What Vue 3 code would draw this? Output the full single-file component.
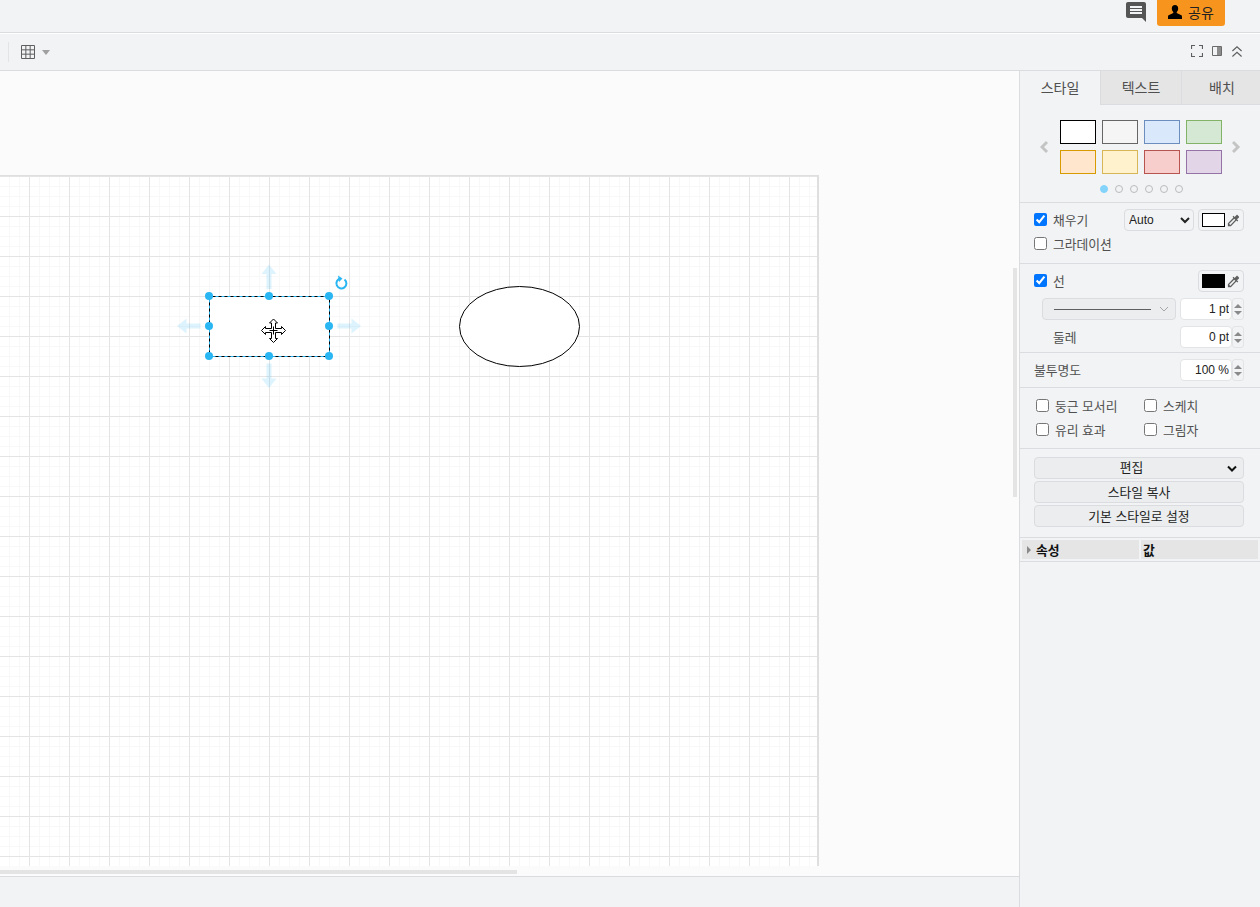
<template>
  <div class="app">
    <header class="menubar">
      <svg class="chat-icon" width="24" height="24" viewBox="0 0 24 24"><path d="M20 2H4c-1.1 0-2 .9-2 2v12c0 1.1.9 2 2 2h14l4 4V4c0-1.1-.9-2-2-2zm-2 12H6v-2h12v2zm0-3H6V9h12v2zm0-3H6V6h12v2z" /></svg>
      <button class="share-btn">
        <svg width="14" height="14" viewBox="0 0 14 14"><path d="M7 0C5 0 3.800 1.400 3.800 3.400c0 1.500.6 2.700 1.500 3.500v1.100L.6 10.300C0 10.600 0 11.200 0 14h14c0-2.800 0-3.400-.6-3.700L8.700 8V6.900c.9-.8 1.500-2 1.500-3.500C10.200 1.400 9 0 7 0z" /></svg>
        <span>공유</span>
      </button>
    </header>

    <div class="toolbar">
      <div class="tool-left">
        <span class="tool-sep"></span>
        <svg class="tool-grid" width="14" height="14" viewBox="0 0 14 14">
          <path d="M.5.5h13v13H.5zM4.830.5v13M9.170.5v13M.5 4.830h13M.5 9.170h13" />
        </svg>
        <span class="tool-caret"></span>
      </div>
      <div class="tool-right">
        <svg width="12" height="12" viewBox="0 0 12 12" class="line-icon"><path d="M.5 4V.5H4M8 .5h3.500V4M11.500 8v3.500H8M4 11.500H.5V8" /></svg>
        <svg width="10" height="10" viewBox="0 0 10 10" class="panel-icon"><path d="M.5.5h9v9h-9z" /><rect x="5" y="1" width="4" height="8" /></svg>
        <svg width="10" height="11" viewBox="0 0 10 11" class="line-icon"><path d="M.4 5 5 .8 9.600 5M.4 10.500 5 6.300l4.600 4.200" /></svg>
      </div>
    </div>

    <div class="main">
      <div class="left-col">
        <div class="canvas">
          <div class="page">
            <svg class="diagram" width="817" height="690" viewBox="0 176 817 690">
              <ellipse cx="519.500" cy="326.500" rx="60" ry="40" fill="#fff" stroke="#000" />
              <rect x="209.500" y="296.500" width="120" height="60" fill="#fff" stroke="#000" />
              <rect x="209.500" y="296.500" width="120" height="60" fill="none" stroke="#29b6f2" stroke-dasharray="3 3" />
              <g class="move-arrows">
                <path d="M269 264.500l7.500 9.500h-5v15h-5v-15h-5z" />
                <path d="M269 388l7.500-9.500h-5v-15h-5v15h-5z" />
                <path d="M177 326l9.500-7.500v5h14v5h-14v5z" />
                <path d="M361 326l-9.500-7.500v5h-14v5h14v5z" />
              </g>
              <g fill="#29b6f2">
                <circle v-for="h in handles" :key="h.x + '-' + h.y" :cx="h.x" :cy="h.y" r="4" />
              </g>
              <g class="rotate">
                <path d="M344.500 279.500a5 5 0 1 1-4-1" />
                <path class="rotate-head" d="M338 275.500l4.500 3-3.500 3.500z" />
              </g>
              <path class="cursor" d="M273.500 319l4 4h-2v5.500h6v-2l4 4-4 4v-2h-6v6h2l-4 4-4-4h2v-6h-6v2l-4-4 4-4v2h6V323h-2z" />
              <path class="cursor-mid" d="M269.500 330.500h8M273.500 326.500v8" />
            </svg>
          </div>
          <span class="scroll-h"></span>
          <span class="scroll-v"></span>
        </div>
        <div class="footer"></div>
      </div>

      <aside class="sidebar">
        <div class="tabs">
          <div class="tab active">스타일</div>
          <div class="tab">텍스트</div>
          <div class="tab">배치</div>
        </div>

        <section class="swatches">
          <div class="swatch-row">
            <svg class="pager" width="10" height="14" viewBox="0 0 10 14"><path d="M7 2 2 7l5 5" /></svg>
            <div class="swatch-grid">
              <span v-for="s in swatches" :key="s.fill" class="swatch" :style="{ background: s.fill, borderColor: s.line }"></span>
            </div>
            <svg class="pager" width="10" height="14" viewBox="0 0 10 14"><path d="M1 2l5 5-5 5" /></svg>
          </div>
          <div class="dots">
            <span v-for="n in 6" :key="n" class="dot" :class="{ on: n === 1 }"></span>
          </div>
        </section>

        <section class="panel fill-panel">
          <div class="row">
            <label class="check up-1"><input type="checkbox" checked /><span>채우기</span></label>
            <select class="auto-select"><option>Auto</option></select>
            <div class="color-btn">
              <span class="color-box white"></span>
              <svg width="15" height="15" viewBox="0 0 24 24"><path :d="dropper" /></svg>
            </div>
          </div>
          <div class="row">
            <label class="check"><input type="checkbox" /><span>그라데이션</span></label>
          </div>
        </section>

        <section class="panel line-panel">
          <div class="row">
            <label class="check up-1"><input type="checkbox" checked /><span>선</span></label>
            <div class="color-btn">
              <span class="color-box black"></span>
              <svg width="15" height="15" viewBox="0 0 24 24"><path :d="dropper" /></svg>
            </div>
          </div>
          <div class="row num-row">
            <div class="line-select">
              <span class="line-sample"></span>
              <svg width="10" height="6" viewBox="0 0 10 6"><path d="M1 1l4 4 4-4" /></svg>
            </div>
            <input class="num" value="1 pt" readonly />
            <div class="spin"><i class="up"></i><i class="down"></i></div>
          </div>
          <div class="row num-row">
            <span class="num-label">둘레</span>
            <input class="num" value="0 pt" readonly />
            <div class="spin"><i class="up"></i><i class="down"></i></div>
          </div>
        </section>

        <section class="panel opacity-panel">
          <div class="row num-row">
            <span class="opacity-label">불투명도</span>
            <input class="num" value="100 %" readonly />
            <div class="spin"><i class="up"></i><i class="down"></i></div>
          </div>
        </section>

        <section class="panel options-panel">
          <label class="check up-1"><input type="checkbox" /><span>둥근 모서리</span></label>
          <label class="check up-1"><input type="checkbox" /><span>스케치</span></label>
          <label class="check up-1"><input type="checkbox" /><span>유리 효과</span></label>
          <label class="check up-1"><input type="checkbox" /><span>그림자</span></label>
        </section>

        <section class="panel actions-panel">
          <div class="action edit-action">
            <span>편집</span>
            <svg width="10" height="7" viewBox="0 0 10 7"><path d="M1 1.500l4 4 4-4" /></svg>
          </div>
          <div class="action">스타일 복사</div>
          <div class="action">기본 스타일로 설정</div>
        </section>

        <section class="panel props-panel">
          <div class="prop-head">
            <i class="prop-arrow"></i>
            <span>속성</span>
          </div>
          <div class="prop-head value-head"><span>값</span></div>
        </section>
      </aside>
    </div>
  </div>
</template>

<script setup>
const dropper = 'M20.71 5.63l-2.34-2.34c-.39-.39-1.02-.39-1.41 0l-3.12 3.12-1.93-1.91-1.41 1.41 1.42 1.42L3 16.25V21h4.75l8.92-8.92 1.42 1.42 1.41-1.41-1.92-1.92 3.12-3.12c.4-.4.4-1.03.01-1.42zM6.92 19L5 17.08l8.06-8.06 1.92 1.92L6.92 19z'

const handles = [
  { x: 209, y: 296 }, { x: 269, y: 296 }, { x: 329, y: 296 },
  { x: 209, y: 326 }, { x: 329, y: 326 },
  { x: 209, y: 356 }, { x: 269, y: 356 }, { x: 329, y: 356 }
]

const swatches = [
  { fill: '#ffffff', line: '#000000' },
  { fill: '#f5f5f5', line: '#666666' },
  { fill: '#dae8fc', line: '#6c8ebf' },
  { fill: '#d5e8d4', line: '#82b366' },
  { fill: '#ffe6cc', line: '#d79b00' },
  { fill: '#fff2cc', line: '#d6b656' },
  { fill: '#f8cecc', line: '#b85450' },
  { fill: '#e1d5e7', line: '#9673a6' }
]
</script>

<style>
html, body {
  margin: 0;
  overflow: hidden;
}
</style>

<style scoped>
.app {
  width: 1260px;
  height: 907px;
  display: flex;
  flex-direction: column;
  overflow: hidden;
  background: #f1f3f4;
  font-family: "Liberation Sans", "Noto Sans CJK KR", sans-serif;
  font-size: 12.8px;
  color: #505050;
}

.menubar {
  height: 32px;
  flex: none;
  display: flex;
  justify-content: flex-end;
  align-items: flex-start;
  border-bottom: 1px solid #dadce0;
}

.chat-icon {
  fill: #555;
  margin-right: 9px;
}

.share-btn {
  width: 68px;
  height: 26px;
  margin-right: 35px;
  padding: 0 0 2px;
  border: 0;
  border-radius: 0 0 3px 3px;
  background: #f7941d;
  color: #222;
  font: 14px "Liberation Sans", "Noto Sans CJK KR", sans-serif;
  display: flex;
  align-items: center;
  justify-content: center;
  gap: 6px;
}

.toolbar {
  height: 36px;
  flex: none;
  display: flex;
  justify-content: space-between;
  align-items: center;
  border-top: 1px solid #fff;
  border-bottom: 1px solid #dadce0;
}

.tool-left,
.tool-right {
  display: flex;
  align-items: center;
}

.tool-sep {
  width: 1px;
  height: 20px;
  margin-left: 8px;
  background: #e3e4e6;
}

.tool-grid {
  margin-left: 12px;
  margin-bottom: 1px;
}

.tool-grid path {
  fill: none;
  stroke: #5f5f5f;
}

.tool-caret {
  margin-left: 7px;
  border-left: 4px solid transparent;
  border-right: 4px solid transparent;
  border-top: 5px solid #a0a0a0;
}

.tool-right {
  gap: 9px;
  margin-right: 18px;
  margin-bottom: 2px;
}

.tool-right svg:last-child {
  margin-left: 1px;
}

.line-icon path {
  fill: none;
  stroke: #5f5f5f;
  stroke-width: 1.200;
}

.panel-icon path {
  fill: none;
  stroke: #6a6a6a;
}

.panel-icon rect {
  fill: #8c8c8c;
}

.main {
  flex: 1;
  min-height: 0;
  display: flex;
}

.left-col {
  width: 1019px;
  flex: none;
  display: flex;
  flex-direction: column;
  border-right: 1px solid #dadce0;
}

.canvas {
  position: relative;
  height: 700px;
  flex: none;
  overflow: hidden;
  background: #fbfbfb;
  border-bottom: 1px solid #dadce0;
  padding-top: 105px;
}

.page {
  position: relative;
  width: 817px;
  height: 690px;
  background-color: #fff;
  background-image:
    linear-gradient(#e4e4e4 1px, transparent 1px),
    linear-gradient(90deg, #e4e4e4 1px, transparent 1px),
    linear-gradient(#f8f8f8 1px, transparent 1px),
    linear-gradient(90deg, #f8f8f8 1px, transparent 1px);
  background-size: 40px 40px, 40px 40px, 10px 10px, 10px 10px;
  background-position: 0 0, 29px 0, 0 0, 9px 0;
  border-right: 2px solid #dfdfdf;
  border-top: 1px solid #dfdfdf;
  margin-top: -1px;
}

.diagram {
  position: absolute;
  left: 0;
  top: 0;
}

.move-arrows path {
  fill: #29b6f2;
  opacity: 0.16;
}

.rotate path {
  fill: none;
  stroke: #29b6f2;
  stroke-width: 2;
}

.rotate .rotate-head {
  fill: #29b6f2;
  stroke: none;
}

.cursor {
  fill: #fff;
  stroke: #000;
  stroke-width: 1;
}

.cursor-mid {
  fill: none;
  stroke: #000;
  stroke-width: 1;
}

.scroll-h {
  position: absolute;
  left: 0;
  top: 799px;
  width: 517px;
  height: 4px;
  background: #e4e4e4;
}

.scroll-v {
  position: absolute;
  left: 1013px;
  top: 197px;
  width: 4px;
  height: 229px;
  background: #e4e4e4;
}

.footer {
  flex: 1;
}

.sidebar {
  flex: 1;
  min-width: 0;
  display: flex;
  flex-direction: column;
}

.tabs {
  height: 34px;
  flex: none;
  display: grid;
  grid-template-columns: 81px 81px 1fr;
}

.tab {
  display: flex;
  align-items: center;
  justify-content: center;
  padding-bottom: 2px;
  background: #e5e5e5;
  border-bottom: 1px solid #dadce0;
  border-right: 1px solid #dadce0;
  font-size: 14px;
  color: #505050;
}

.tab:last-child {
  padding-left: 2px;
  border-right: 0;
}

.tab.active {
  background: #f1f3f4;
  border-bottom: 0;
}

.swatches {
  height: 97px;
  flex: none;
  border-bottom: 1px solid #dadce0;
}

.swatch-row {
  display: flex;
  align-items: center;
  justify-content: center;
  gap: 10px;
  padding: 15px 0 0 2px;
}

.pager path {
  fill: none;
  stroke: #c4c4c4;
  stroke-width: 3;
}

.swatch-grid {
  display: grid;
  grid-template-columns: repeat(4, 36px);
  grid-auto-rows: 24px;
  gap: 6px;
}

.swatch {
  box-sizing: border-box;
  border: 1px solid;
}

.dots {
  display: flex;
  justify-content: center;
  gap: 7px;
  margin-top: 11px;
  margin-left: 3px;
}

.dot {
  width: 8px;
  height: 8px;
  box-sizing: border-box;
  border: 1px solid #bbb;
  border-radius: 50%;
}

.dot.on {
  background: #84d3fb;
  border-color: #84d3fb;
}

.panel {
  flex: none;
  box-sizing: border-box;
  border-bottom: 1px solid #dadce0;
}

.row {
  display: flex;
  align-items: center;
}

.check {
  display: inline-flex;
  align-items: center;
  gap: 6px;
}

.check.up-1 {
  position: relative;
  top: -1px;
}

.check input {
  width: 13px;
  height: 13px;
  margin: 0;
}

.fill-panel {
  height: 61px;
  padding: 6px 16px 0 14px;
}

.fill-panel .row:first-child {
  height: 22px;
  margin-bottom: 6px;
}

.fill-panel .row:last-child {
  height: 12px;
}

.fill-panel .check {
  flex: 1;
}

.auto-select {
  width: 70px;
  height: 22px;
  margin-right: 4px;
  padding: 0;
  border: 1px solid #dadce0;
  border-radius: 4px;
  background: #f1f3f4;
  color: #222;
  font: 12px "Liberation Sans", sans-serif;
}

.color-btn {
  width: 46px;
  height: 22px;
  box-sizing: border-box;
  display: flex;
  align-items: center;
  gap: 1px;
  padding-left: 3px;
  border: 1px solid #dadce0;
  border-radius: 4px;
}

.color-box {
  width: 23px;
  height: 14px;
  box-sizing: border-box;
  border: 1px solid #000;
}

.color-box.white {
  background: #fff;
}

.color-box.black {
  background: #000;
}

.color-btn svg {
  fill: #5f5f5f;
}

.line-panel {
  height: 89px;
  padding: 6px 16px 0 14px;
}

.line-panel > .row:first-child {
  justify-content: space-between;
  height: 22px;
  margin-bottom: 6px;
}

.num-row {
  height: 22px;
}

.line-panel .num-row + .num-row {
  margin-top: 6px;
}

.line-select {
  width: 134px;
  height: 22px;
  flex: none;
  box-sizing: border-box;
  margin: 0 4px 0 8px;
  padding: 0 6px 0 11px;
  display: flex;
  align-items: center;
  gap: 8px;
  border: 1px solid #dadce0;
  border-radius: 4px;
  background: #ebedee;
}

.line-sample {
  flex: 1;
  height: 1px;
  background: #5f5f5f;
}

.line-select svg path {
  fill: none;
  stroke: #a6a6a6;
}

.num {
  width: 52px;
  height: 22px;
  flex: none;
  box-sizing: border-box;
  padding: 0 2px 0 0;
  border: 1px solid #e3e4e6;
  border-radius: 4px;
  background: #fff;
  color: #222;
  text-align: right;
  font: 12px "Liberation Sans", sans-serif;
  outline: none;
}

.spin {
  width: 12px;
  height: 22px;
  flex: none;
  box-sizing: border-box;
  display: flex;
  flex-direction: column;
  align-items: center;
  justify-content: center;
  gap: 3px;
  border: 1px solid #e3e4e6;
  border-radius: 3px;
}

.spin i {
  border-left: 4px solid transparent;
  border-right: 4px solid transparent;
}

.spin .up {
  border-bottom: 4px solid #8a8a8a;
}

.spin .down {
  border-top: 4px solid #8a8a8a;
}

.num-label {
  width: 146px;
  flex: none;
  padding-left: 19px;
  box-sizing: border-box;
  position: relative;
  top: -1px;
}

.opacity-label {
  width: 146px;
  flex: none;
  position: relative;
  top: -1px;
}

.opacity-panel {
  height: 35px;
  padding: 6px 16px 0 14px;
}

.options-panel {
  height: 61px;
  padding: 6px 0 0 16px;
  display: grid;
  grid-template-columns: 108px 1fr;
  grid-auto-rows: 24px;
}

.actions-panel {
  height: 89px;
  padding: 8px 16px 0 14px;
  display: flex;
  flex-direction: column;
  gap: 2px;
}

.action {
  height: 22px;
  box-sizing: border-box;
  display: flex;
  align-items: center;
  justify-content: center;
  padding-bottom: 1px;
  border: 1px solid #dadce0;
  border-radius: 4px;
  background: #ebedee;
  color: #222;
}

.edit-action {
  position: relative;
  padding-bottom: 3px;
}

.edit-action span {
  margin-left: -15px;
}

.edit-action svg {
  position: absolute;
  right: 6px;
  top: 7px;
}

.edit-action path {
  fill: none;
  stroke: #111;
  stroke-width: 2;
}

.props-panel {
  height: 24px;
  padding: 2px;
  display: grid;
  grid-template-columns: 117px 117px;
  gap: 2px;
}

.prop-head {
  height: 19px;
  display: flex;
  align-items: center;
  padding-left: 14px;
  position: relative;
  background: #e5e5e5;
  color: #111;
  font-weight: 700;
}

.value-head {
  padding-left: 2px;
}

.prop-arrow {
  position: absolute;
  left: 5px;
  top: 6px;
  border-top: 4px solid transparent;
  border-bottom: 4px solid transparent;
  border-left: 4px solid #8a8a8a;
}
</style>
